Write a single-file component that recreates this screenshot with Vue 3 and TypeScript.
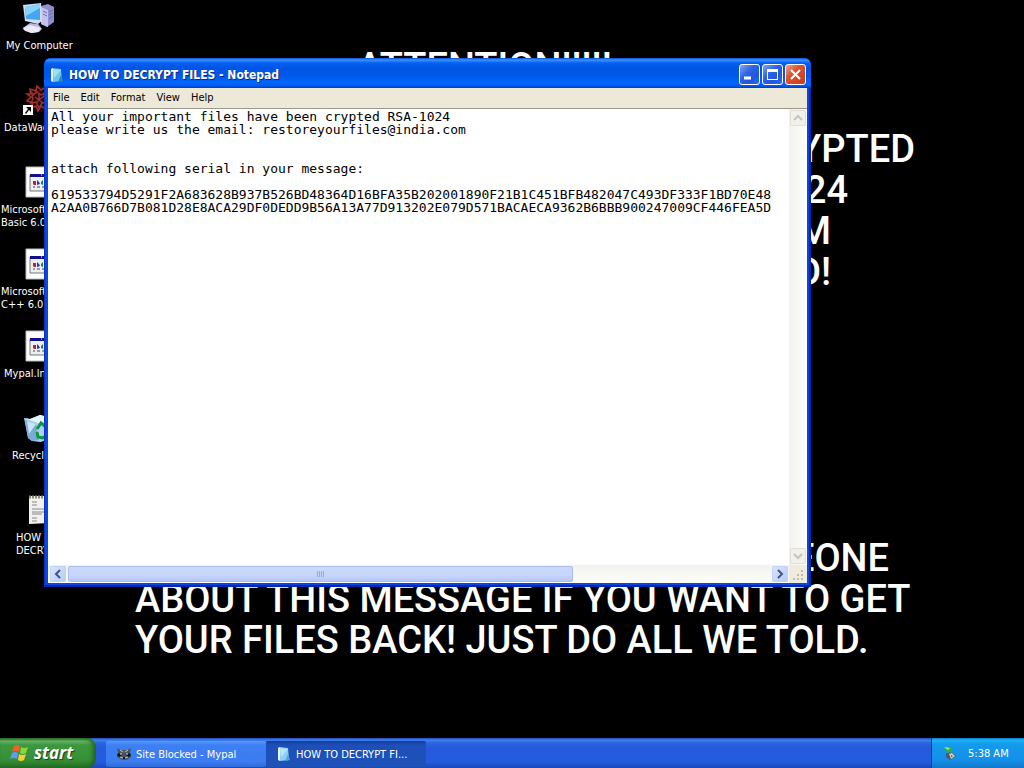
<script setup lang="ts">
import { ref } from 'vue'

interface Shortcut {
  kind: string
  lines: string[]
  inset: string
}

const shortcuts: Shortcut[] = [
  { kind: 'computer', lines: ['My Computer'], inset: 'i6' },
  { kind: 'virus', lines: ['DataWac'], inset: 'i4' },
  { kind: 'program', lines: ['Microsoft', 'Basic 6.0'], inset: 'i1' },
  { kind: 'program', lines: ['Microsoft', 'C++ 6.0'], inset: 'i1' },
  { kind: 'program', lines: ['Mypal.lnk'], inset: 'i4' },
  { kind: 'bin', lines: ['Recycle Bin'], inset: 'i12' },
  { kind: 'note', lines: ['HOW TO', 'DECRYPT'], inset: 'i16' },
]

const menus: string[] = ['File', 'Edit', 'Format', 'View', 'Help']

const content = ref<string>(
  [
    'All your important files have been crypted RSA-1024',
    'please write us the email: restoreyourfiles@india.com',
    '',
    '',
    'attach following serial in your message:',
    '',
    '619533794D5291F2A683628B937B526BD48364D16BFA35B202001890F21B1C451BFB482047C493DF333F1BD70E48',
    'A2AA0B766D7B081D28E8ACA29DF0DEDD9B56A13A77D913202E079D571BACAECA9362B6BBB900247009CF446FEA5D',
  ].join('\n'),
)
</script>

<template>
  <div class="screen">
    <main class="desktop">
      <div class="wallpaper">
        <p class="heading">ATTENTION!!!!!</p>
        <div class="upper">
          <p class="end-a">CRYPTED</p>
          <p class="end-b">1024</p>
          <p class="end-c">M</p>
          <p class="end-c">D!</p>
        </div>
        <div class="lower">
          <p class="end-d">EONE</p>
          <p>ABOUT THIS MESSAGE IF YOU WANT TO GET</p>
          <p>YOUR FILES BACK! JUST DO ALL WE TOLD.</p>
        </div>
      </div>

      <nav class="shortcuts" aria-label="Desktop">
        <button v-for="(s, n) in shortcuts" :key="n" type="button" class="shortcut">
          <svg v-if="s.kind === 'computer'" class="pic" viewBox="0 0 32 32" aria-hidden="true">
            <path d="M19 4l7-2 6 3v15l-7 5-6-3z" fill="#8f8fd0" />
            <path d="M19 5l7 3v17l-7-3z" fill="#c3c3ea" />
            <path d="M21 9l4 2M21 12l4 2M27 10l4-2M27 13l4-2M27 17l4-3" stroke="#6a6ab4" />
            <path d="M8 21l8 1 4 5-3 3-7 1-7-2-2-3 4-3z" fill="#b9b7dd" />
            <path d="M1 26l7-3 11 3-3 4-7 1-7-3z" fill="#eceafa" />
            <path d="M1 3l18-2 1 18-4 3-13-3z" fill="#cfdcf4" />
            <path d="M3 5l15-3v16L4 17z" fill="#46a4f2" />
            <path d="M3 5l15-3v4L4 14z" fill="#86d2fb" />
          </svg>
          <svg v-else-if="s.kind === 'virus'" class="pic" viewBox="0 0 32 32" aria-hidden="true">
            <circle cx="17" cy="15" r="13" fill="#240607" />
            <g fill="none" stroke="#9b3434" stroke-width="1.5">
              <path d="M5 10l4 3-4 4 6 2-2 5 5-2 2 5 3-5 5 3 1-6 6-1-4-4 3-5-6-1V3l-5 3-4-4-1 5-6-2 1 5z" />
              <path d="M10 12l5-4 4 3 5-2-1 6 3 3-6 1-3 5-3-6-5 1 2-4z" />
              <path d="M13 13l4 3 5-4M14 19l3-3 4 3M17 10v6M8 7l4 4M24 6l-3 5" />
            </g>
            <path d="M1 21h10v10H1z" fill="#fff" />
            <path d="M4 23h5v5l-2-2-3 4-1-1 3-4z" fill="#000" />
          </svg>
          <svg v-else-if="s.kind === 'program'" class="pic" viewBox="0 0 32 32" aria-hidden="true">
            <path d="M4 1h28v30H4z" fill="#fff" />
            <path d="M4 1h28v30H4z" fill="none" stroke="#bbb" />
            <path d="M8 9h24v16H8z" fill="#eee" stroke="#777" />
            <path d="M8 8h24v3H8z" fill="#10108a" />
            <path d="M19 9h1M22 9h1" stroke="#fff" />
            <path d="M11 15h3v4h-2l-1-1z" fill="#b52335" />
            <path d="M15 14v5l3-1-1-2z" fill="#223ab8" />
            <path d="M19 18v-2l2-2v5z" fill="#158057" />
            <path d="M11 21h2M15 21h3M20 21h3" stroke="#446" />
          </svg>
          <svg v-else-if="s.kind === 'bin'" class="pic" viewBox="0 0 32 32" aria-hidden="true">
            <path d="M2 6l6 1 10-4 12 3-4 21-7 3-9-1-4-3z" fill="#a9d4f0" />
            <path d="M2 6l6 1 10-4 12 3-11 6z" fill="#e6f6ff" />
            <path d="M3 8l11 4 3 16-7 1-4-3z" fill="#79abd8" />
            <path d="M5 9l9 3-7 10z" fill="#c7e5fa" />
            <g fill="none" stroke="#16943b" stroke-width="3">
              <path d="M15 17l4-6 5 4M15 20l1 5 5 1M24 17l1 7-5 2" />
            </g>
          </svg>
          <svg v-else class="pic" viewBox="0 0 32 32" aria-hidden="true">
            <path d="M7 2h20v27l-20 1z" fill="#f2f1ed" />
            <path d="M7 3h20" stroke="#8f8b72" stroke-width="3" stroke-dasharray="2 1" />
            <path d="M10 8h5M10 11h5M10 15h12M10 18h12M10 20h10M10 24h5M10 27h5" stroke="#888" />
          </svg>
          <span class="caption" :class="s.inset">
            <span v-for="line in s.lines" :key="line">{{ line }}</span>
          </span>
        </button>
      </nav>

      <section class="window" aria-label="HOW TO DECRYPT FILES - Notepad">
        <header class="titlebar">
          <svg class="small-pic" viewBox="0 0 16 16" aria-hidden="true">
            <path d="M3 1l9 1 1 12-9 1z" fill="#6fc6e4" />
            <path d="M2 2l2-1v14l-2-1z" fill="#e4f7fc" />
            <path d="M4 2l8 1-7 8z" fill="#9fe0f4" />
            <path d="M12 8l2 6-5 1z" fill="#2f8bb4" />
          </svg>
          <h1>HOW TO DECRYPT FILES - Notepad</h1>
          <button type="button" class="control" aria-label="Minimize">
            <svg viewBox="0 0 21 21"><path d="M5 14h7" stroke="#fff" stroke-width="3" /></svg>
          </button>
          <button type="button" class="control" aria-label="Maximize">
            <svg viewBox="0 0 21 21">
              <path d="M5 5h11v11H5zM6 8v7h9V8z" fill="#fff" fill-rule="evenodd" />
            </svg>
          </button>
          <button type="button" class="control close" aria-label="Close">
            <svg viewBox="0 0 21 21"><path d="M6 6l9 9M15 6l-9 9" stroke="#fff" stroke-width="2" /></svg>
          </button>
        </header>

        <nav class="menubar" aria-label="Menu">
          <button v-for="m in menus" :key="m" type="button">{{ m }}</button>
        </nav>

        <div class="editor">
          <textarea v-model="content" wrap="off" spellcheck="false" aria-label="Document text"></textarea>
          <div class="vbar">
            <button type="button" class="arrow off" aria-label="Scroll up" disabled>
              <svg viewBox="0 0 16 16"><path d="M4 10l4-4 4 4" /></svg>
            </button>
            <button type="button" class="arrow off" aria-label="Scroll down" disabled>
              <svg viewBox="0 0 16 16"><path d="M4 6l4 4 4-4" /></svg>
            </button>
          </div>
          <div class="hbar">
            <button type="button" class="arrow" aria-label="Scroll left">
              <svg viewBox="0 0 16 16"><path d="M10 4l-4 4 4 4" /></svg>
            </button>
            <div class="track">
              <div class="thumb"><i></i><i></i><i></i><i></i></div>
            </div>
            <button type="button" class="arrow" aria-label="Scroll right">
              <svg viewBox="0 0 16 16"><path d="M6 4l4 4-4 4" /></svg>
            </button>
          </div>
          <svg class="grip" viewBox="0 0 18 18" aria-hidden="true">
            <path
              d="M12 5h2v2h-2zM8 9h2v2H8zM12 9h2v2h-2zM4 13h2v2H4zM8 13h2v2H8zM12 13h2v2h-2z"
              fill="#c9b9a4"
            />
          </svg>
        </div>
      </section>
    </main>

    <footer class="taskbar">
      <button type="button" class="start">
        <svg viewBox="0 0 20 20" aria-hidden="true">
          <path d="M4 3q3-2 6 0L9 9Q6 7 2 9z" fill="#f0622a" />
          <path d="M11 4q3 2 7 0l-2 6q-4 2-6 0z" fill="#8bd43b" />
          <path d="M2 10q3-2 6 0l-1 6q-3-2-7 0z" fill="#5d9cf4" />
          <path d="M9 11q3 2 7 0l-2 6q-3 2-6 0z" fill="#fbcb3a" />
        </svg>
        <span>start</span>
      </button>
      <button type="button" class="task">
        <svg class="small-pic" viewBox="0 0 16 16" aria-hidden="true">
          <path d="M1 2l4 2h6l4-2-1 5 1 4-4 3H6l-5-3 1-4z" fill="#4b5661" />
          <path d="M2 7l5 1-3 3-3-1zM14 7L9 8l3 3 3-1z" fill="#10151b" />
          <path d="M4 4l3 2M12 4L9 6M4 11l3 1M12 11l-3 1" fill="none" stroke="#b8c4cf" />
          <path d="M7 11h2v2H7z" fill="#10151b" />
          <path d="M4 8h2M10 8h2" stroke="#e8eef4" />
        </svg>
        <span>Site Blocked - Mypal</span>
      </button>
      <button type="button" class="task active">
        <svg class="small-pic" viewBox="0 0 16 16" aria-hidden="true">
          <path d="M3 1l9 1 1 12-9 1z" fill="#8bd0f4" />
          <path d="M2 2l2-1v14l-2-1z" fill="#e4f7fc" />
          <path d="M4 2l8 1-7 8z" fill="#b9e5fa" />
          <path d="M12 8l2 6-5 1z" fill="#4ca8dc" />
        </svg>
        <span>HOW TO DECRYPT FI...</span>
      </button>
      <div class="tray">
        <svg class="small-pic" viewBox="0 0 16 16" aria-hidden="true">
          <path d="M4 8l6-1 4 4-6 4-4-3z" fill="#4b5a62" />
          <path d="M7 9l3-1 3 3-4 3z" fill="#c9cfd0" />
          <path d="M9 10l2 1-2 1z" fill="#a33" />
          <path d="M1 2l8 1 1 5-3-1-2 2V6z" fill="#2fb52e" />
          <path d="M2 2l6 1-2 2z" fill="#a5ee7c" />
        </svg>
        <time>5:38 AM</time>
      </div>
    </footer>
  </div>
</template>

<style>
html,
body {
  background: #000;
}
</style>

<style scoped>
.screen {
  display: flex;
  flex-direction: column;
  height: 100vh;
  overflow: hidden;
  background: #000;
  font-family: 'DejaVu Sans Condensed', 'DejaVu Sans', sans-serif;
  font-size: 11px;
  line-height: 13px;
}

button {
  margin: 0;
  padding: 0;
  border: 0;
  background: none;
  color: inherit;
  font: inherit;
}

svg {
  display: block;
}

.desktop {
  position: relative;
  flex: 1;
  min-height: 0;
}

.wallpaper {
  display: flex;
  flex-direction: column;
  box-sizing: border-box;
  height: 100%;
  padding: 47px 0 77px;
  color: #fff;
  font-family: Roboto, sans-serif;
  font-size: 38px;
  font-weight: 500;
  line-height: 41px;
  white-space: nowrap;
}

.wallpaper p {
  margin: 0;
}

.heading {
  padding-left: 357px;
}

.upper {
  padding-top: 41px;
  text-align: right;
}

.lower {
  margin-top: auto;
  padding-left: 135px;
}

.end-a {
  padding-right: 109px;
}

.end-b {
  padding-right: 176px;
}

.end-c {
  padding-right: 193px;
}

.end-d {
  padding-right: 135px;
  text-align: right;
}

.shortcuts {
  position: absolute;
  top: 2px;
  left: 0;
  display: flex;
  flex-direction: column;
  color: #fff;
}

.shortcut {
  display: flex;
  flex-direction: column;
  gap: 5px;
  width: 76px;
  height: 82px;
  text-align: left;
  white-space: nowrap;
}

.pic {
  width: 32px;
  height: 32px;
  margin-left: 22px;
}

.caption {
  display: flex;
  flex-direction: column;
}

.i1 {
  padding-left: 1px;
}

.i4 {
  padding-left: 4px;
}

.i6 {
  padding-left: 6px;
}

.i12 {
  padding-left: 12px;
}

.i16 {
  padding-left: 16px;
}

.window {
  position: absolute;
  inset: 58px 213px 151px 44px;
  display: flex;
  flex-direction: column;
  box-sizing: border-box;
  padding: 0 4px 4px;
  border-radius: 7px 7px 0 0;
  background: #0a48dd;
  box-shadow: inset 1px 0 #0831c8, inset -2px -2px #0028b4;
}

.titlebar {
  display: flex;
  align-items: center;
  gap: 2px;
  height: 30px;
  margin: 0 -4px;
  padding: 3px 5px 0;
  box-sizing: border-box;
  border-radius: 7px 7px 0 0;
  background: linear-gradient(#0a50d8, #3a93ff 2px, #0660f0 5px, #0054e3 10px, #0058ea 18px, #0266ff 25px, #0260f5 27px, #003cc8);
}

.small-pic {
  flex: none;
  width: 16px;
  height: 16px;
}

h1 {
  flex: 1;
  margin: 0;
  padding: 1px 0 0 2px;
  color: #fff;
  font-size: 12px;
  font-weight: 700;
  line-height: 16px;
  text-shadow: 1px 1px #0a2a84;
  white-space: nowrap;
}

.control {
  width: 21px;
  height: 21px;
  box-sizing: border-box;
  border: 1px solid #fff;
  border-radius: 3px;
  background: linear-gradient(135deg, #7fa6f6, #2f62e2 40%, #2257dc 70%, #2a6cf0);
}

.control svg {
  width: 21px;
  height: 21px;
  margin: -1px;
}

.close {
  background: linear-gradient(135deg, #f0a08a, #dc5232 40%, #cb3c14);
}

.menubar {
  display: flex;
  height: 20px;
  padding-left: 5px;
  gap: 11px;
  border-bottom: 1px solid #9b998b;
  background: #ece9d8;
  color: #000;
}

.menubar button {
  height: 19px;
}

.editor {
  display: grid;
  flex: 1;
  grid-template-rows: minmax(0, 1fr) 18px;
  grid-template-columns: minmax(0, 1fr) 18px;
  min-height: 0;
  background: #fff;
}

textarea {
  box-sizing: border-box;
  width: 100%;
  height: 100%;
  margin: 0;
  padding: 1px 0 0 3px;
  border: 0;
  outline: 0;
  background: #fff;
  color: #000;
  font-family: 'DejaVu Sans Mono', monospace;
  font-size: 13px;
  line-height: 13px;
  overflow: hidden;
  resize: none;
}

.vbar {
  display: flex;
  flex-direction: column;
  justify-content: space-between;
  padding: 1px;
  background: linear-gradient(90deg, #f2f2ee, #fdfdfa);
}

.hbar {
  display: flex;
  padding: 1px 1px 1px 2px;
  background: linear-gradient(#f2f2ee, #fdfdfa);
}

.arrow {
  flex: none;
  width: 16px;
  height: 16px;
  border-radius: 2px;
  background: linear-gradient(135deg, #dbe5fe, #b6caf8);
  box-shadow: inset 0 0 0 1px #c2d2f8;
}

.arrow path {
  fill: none;
  stroke: #3f577f;
  stroke-width: 2;
}

.off {
  background: #f1f0ea;
  box-shadow: inset 0 0 0 1px #e2e0d6;
}

.off path {
  stroke: #c6c5bb;
}

.track {
  flex: 1;
  padding: 0 2px;
}

.thumb {
  display: flex;
  align-items: center;
  justify-content: center;
  gap: 1px;
  box-sizing: border-box;
  width: 72%;
  height: 16px;
  border: 1px solid #a9bff0;
  border-radius: 2px;
  background: linear-gradient(#cbd9fd, #c6d5fd 60%, #b4c8f6);
}

.thumb i {
  width: 1px;
  height: 6px;
  background: #91aae4;
}

.grip {
  width: 18px;
  height: 18px;
  background: #efecdf;
}

.taskbar {
  display: flex;
  flex: none;
  height: 30px;
  background: linear-gradient(#1b48b0, #3b83f2 2px, #2c64e0 5px, #245adb 10px, #245cdf 24px, #1b47b4);
  color: #fff;
}

.start {
  display: flex;
  align-items: center;
  gap: 4px;
  width: 96px;
  margin-right: 10px;
  padding-left: 10px;
  box-sizing: border-box;
  border-radius: 0 9px 9px 0;
  background: linear-gradient(#256f25, #69b569 3px, #3d983d 7px, #368f36 22px, #246f24);
  box-shadow: inset -3px 0 4px #1f6420;
  font-family: 'Open Sans', sans-serif;
  font-size: 17px;
  font-style: italic;
  font-weight: 700;
  line-height: 22px;
  text-shadow: 1px 1px 1px #173f17;
}

.start svg {
  width: 20px;
  height: 20px;
}

.task {
  display: flex;
  align-items: center;
  gap: 4px;
  width: 160px;
  height: 26px;
  margin-top: 3px;
  padding-left: 10px;
  box-sizing: border-box;
  border-radius: 2px;
  background: linear-gradient(#5c98fa, #3d80f4 4px, #3b7cf0 21px, #3168d8);
  white-space: nowrap;
}

.active {
  background: linear-gradient(#163b96, #1d4fb8 4px, #1e52b9);
}

.tray {
  display: flex;
  align-items: center;
  gap: 10px;
  box-sizing: border-box;
  width: 93px;
  margin-left: auto;
  padding-left: 10px;
  border-left: 1px solid #0c3f9a;
  background: linear-gradient(#0c79c8, #1ab4f4 2px, #149bec 6px, #1290e8 22px, #1477c8);
}
</style>
